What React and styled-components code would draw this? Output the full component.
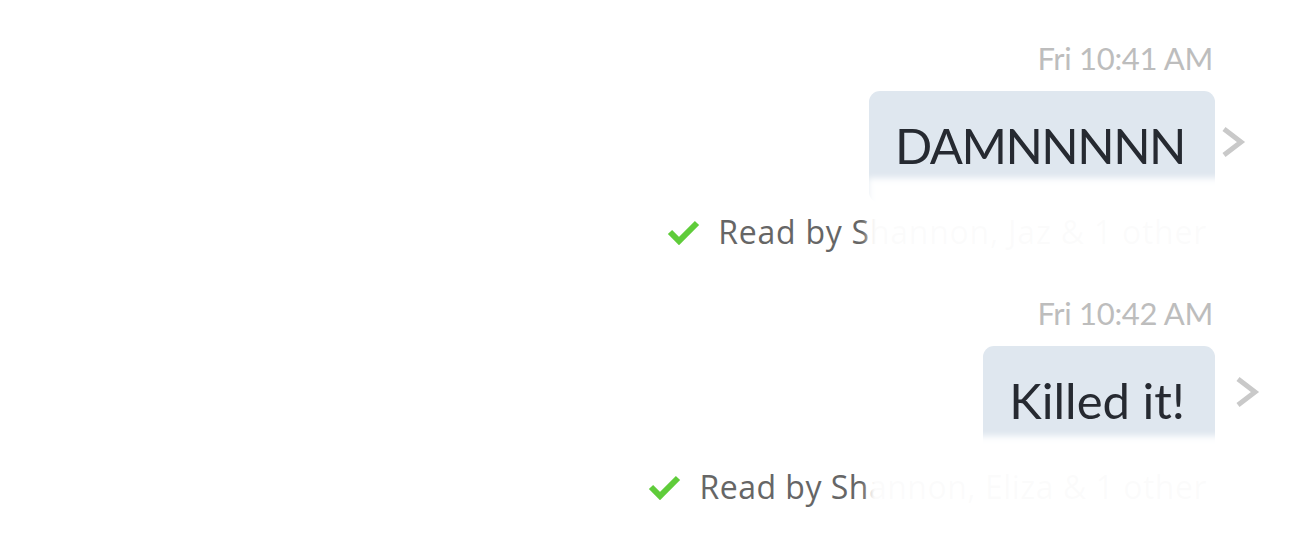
import React from "react";
import styled, { createGlobalStyle } from "styled-components";

const Global = createGlobalStyle`
  html, body { margin: 0; padding: 0; background: #ffffff; }
  body { font-family: "Lato", "Open Sans", sans-serif; }
`;

const Page = styled.div`
  width: 1290px;
  height: 548px;
  overflow: hidden;
  background: #fff;
  display: flex;
  flex-direction: column;
  align-items: flex-end;
  padding: 38px 75px 0 0;
  box-sizing: border-box;
  gap: 41px;
`;

const Group = styled.div`
  position: relative;
  display: flex;
  flex-direction: column;
  align-items: flex-end;
`;

const Stamp = styled.div`
  font-size: 31px;
  line-height: 40px;
  color: #bdbdbd;
  margin-right: 2px;
  letter-spacing: -0.3px;
`;

const BubbleRow = styled.div`
  display: flex;
  align-items: flex-start;
  margin-top: 13px;
  margin-right: ${(p) => -(p.$gap + 26)}px;
  gap: ${(p) => p.$gap}px;
`;

const Bubble = styled.div`
  height: 112px;
  display: flex;
  align-items: center;
  padding: 0 30px 4px 26px;
  background: #dfe7ef;
  border-radius: 11px;
  color: #262a31;
  font-size: 49px;
  letter-spacing: ${(p) => p.$spacing}px;
  box-sizing: border-box;
`;

const Chevron = styled.svg`
  width: 26px;
  height: 34px;
  flex: none;
  margin-top: ${(p) => p.$offset}px;
`;

const Receipt = styled.div`
  display: flex;
  align-items: center;
  gap: 18px;
  margin-top: 9px;
  margin-right: 8px;
  font-family: "Open Sans", "Lato", sans-serif;
  font-size: 32px;
  letter-spacing: ${(p) => p.$spacing}px;
  line-height: 40px;
  color: #666666;
`;

const Check = styled.svg`
  width: 33px;
  height: 26px;
  flex: none;
`;

const Veil = styled.div`
  position: absolute;
  right: -8px;
  width: 355px;
  top: ${(p) => p.$top}px;
  height: 90px;
  background: rgba(255, 255, 255, 0.975);
  filter: blur(3px);
  pointer-events: none;
`;

const messages = [
  { time: "Fri 10:41 AM", text: "DAMNNNNN", spacing: -1.5, readers: "Shannon, Jaz & 1 other", rs: 0.75, gap: 5, chev: 34, veilTop: 140 },
  { time: "Fri 10:42 AM", text: "Killed it!", spacing: 0, readers: "Shannon, Eliza & 1 other", rs: 0.5, gap: 19, chev: 29, veilTop: 143 },
];

function Message({ m }) {
  return (
    <Group>
      <Stamp>{m.time}</Stamp>
      <BubbleRow $gap={m.gap}>
        <Bubble $spacing={m.spacing}>{m.text}</Bubble>
        <Chevron viewBox="0 0 26 34" $offset={m.chev}>
          <polyline points="4,4 21,17 4,30" fill="none" stroke="#c9c9c9" strokeWidth="5" />
        </Chevron>
      </BubbleRow>
      <Receipt $spacing={m.rs}>
        <Check viewBox="0 0 33 26">
          <polyline points="3,13 12,22 30,4" fill="none" stroke="#5fcc3a" strokeWidth="6" />
        </Check>
        <span>Read by {m.readers}</span>
      </Receipt>
      <Veil $top={m.veilTop} />
    </Group>
  );
}

export default function App() {
  return (
    <>
      <Global />
      <Page>
        {messages.map((m) => (
          <Message key={m.time} m={m} />
        ))}
      </Page>
    </>
  );
}
